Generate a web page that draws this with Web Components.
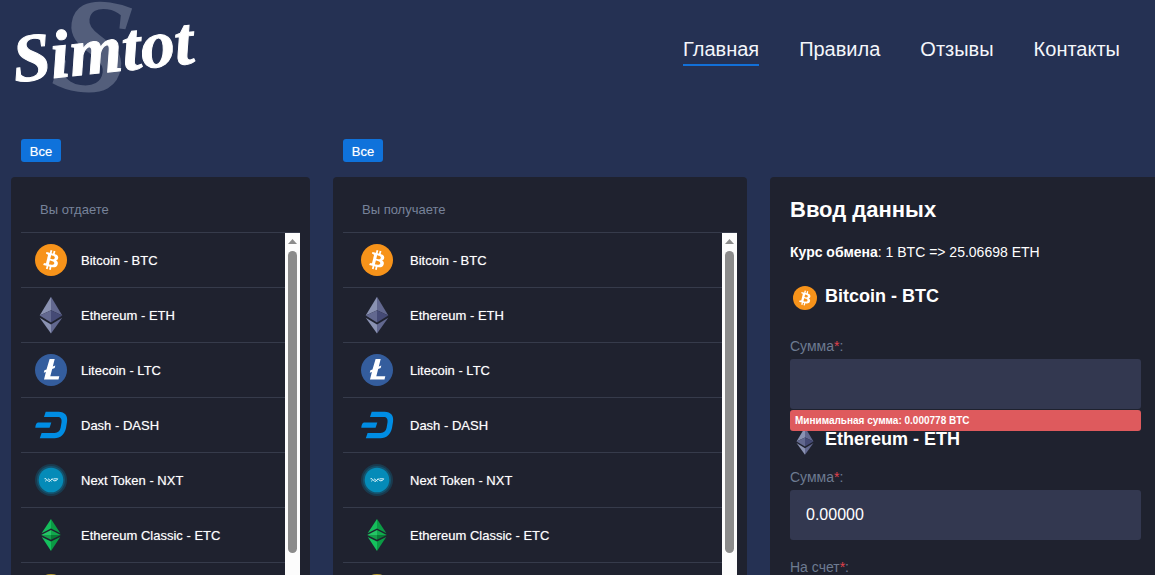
<!DOCTYPE html>
<html lang="ru">
<head>
<meta charset="utf-8">
<meta name="viewport" content="width=device-width, initial-scale=1">
<title>Simtot</title>
<style>
  html { scrollbar-width: none; }
  body {
    margin: 0;
    background: #253153;
    color: #fff;
    font-family: "Liberation Sans", Arial, sans-serif;
    font-size: 14px;
    overflow-x: hidden;
  }
</style>
</head>
<body>
<exchange-page></exchange-page>
<script>
const define = (name, html, setup) => {
  const template = document.createElement('template');
  template.innerHTML = html;
  customElements.define(name, class extends HTMLElement {
    constructor() {
      super();
      this.attachShadow({ mode: 'open' }).append(template.content.cloneNode(true));
    }
    connectedCallback() { if (setup) setup(this, this.shadowRoot); }
  });
};

/* Coin artwork, drawn on a 40 x 40 canvas */
const coins = {
  btc: `<circle cx="20" cy="20" r="16" fill="#f7931a"/><path transform="translate(4 4)" fill="#fff" d="M23.189 14.02c.314-2.096-1.283-3.223-3.465-3.975l.708-2.84-1.728-.43-.69 2.765c-.454-.114-.92-.22-1.385-.326l.695-2.783L15.596 6l-.708 2.839c-.376-.086-.746-.17-1.104-.26l.002-.009-2.384-.595-.46 1.846s1.283.294 1.256.312c.7.175.826.638.805 1.006l-.806 3.235c.048.012.11.03.18.057l-.183-.045-1.13 4.532c-.086.212-.303.531-.793.41.018.025-1.256-.313-1.256-.313l-.858 1.978 2.25.561c.418.105.828.215 1.231.318l-.715 2.872 1.727.43.708-2.84c.472.127.93.245 1.378.357l-.706 2.828 1.728.43.715-2.866c2.948.558 5.164.333 6.097-2.333.752-2.146-.037-3.385-1.588-4.192 1.13-.26 1.98-1.003 2.207-2.538zm-3.95 5.538c-.533 2.147-4.148.986-5.32.695l.95-3.805c1.172.293 4.929.872 4.37 3.11zm.535-5.569c-.487 1.953-3.495.96-4.47.717l.86-3.45c.975.243 4.118.696 3.61 2.733z"/>`,
  eth: `<path fill="#8a92b2" d="M20 1.700v13.600L8.700 20.500z"/><path fill="#62688f" d="M20 1.700v13.600l11.300 5.200z"/><path fill="#62688f" d="M8.700 20.500 20 15.300v12.100z"/><path fill="#454a75" d="M31.300 20.500 20 15.300v12.100z"/><path fill="#8a92b2" d="M8.700 22.700 20 29.500v8.900z"/><path fill="#62688f" d="M31.300 22.700 20 29.500v8.900z"/>`,
  ltc: `<circle cx="20" cy="20" r="16" fill="#345d9d"/><path fill="#fff" d="M18.600 9h5.100l-1.900 7.400 2.500-.9-.6 2.500-2.500.9-1.900 7.300h9l-.8 3.200H13l1.900-7.500-2.100.8.6-2.500 2.100-.8z"/>`,
  dash: `<path fill="#008de4" d="M14.700 6.800H27.500C34 6.800 37 11 36 17L35 23C33.600 29.500 29.500 33.200 23.500 33.200H8.800L10.600 27.900H23.700C27 27.900 28.900 26 29.600 22.800L30.500 17.500C31 14 29.800 12.100 26.500 12.100H13z"/><path fill="#008de4" d="M7 17.600h13.300l-1.700 5.200H4.300C4.500 20 5.300 18 7 17.600z"/>`,
  nxt: `<circle cx="20" cy="20" r="16" fill="#0b83ad" opacity=".25"/><circle cx="20" cy="20" r="14" fill="#0b83ad" opacity=".35"/><circle cx="20" cy="20" r="12.300" fill="#058bb8"/><path fill="none" stroke="#d8f1f8" stroke-width="1" d="M13.500 18.700h1.500l2.500 2.600h1.500M17 18.700l3.500 2.600M14.200 21.300l1.500-1.300M19.500 20.300l2-1.600M21 18.700l2.500 2.600M22.500 18.800h4.200l-1.400 1.800h-2"/>`,
  etc: `<path fill="#15bd5c" d="M20 4v9.500l-9.400 4.700z"/><path fill="#0b9b45" d="M20 4v9.500l9.400 4.700z"/><path fill="#25c566" d="M10.200 20 20 15.100v4.800z"/><path fill="#12a94d" d="M29.800 20 20 15.100v4.800z"/><path fill="#149e4a" d="M10.200 20 20 24.700v-4.800z"/><path fill="#087b35" d="M29.800 20 20 24.700v-4.800z"/><path fill="#15c15e" d="M10.800 22 20 26.400v9.500z"/><path fill="#0b9b45" d="M29.200 22 20 26.400v9.500z"/>`,
  doge: `<circle cx="20" cy="20" r="16" fill="#ba9f33"/><circle cx="20" cy="20" r="13" fill="#e1b303"/>`
};

define('coin-icon', `
  <style>
    :host { display: block; flex: none; width: var(--coin-size, 40px); height: var(--coin-size, 40px); }
    svg { display: block; width: 100%; height: 100%; }
  </style>
  <svg viewBox="0 0 40 40" aria-hidden="true"></svg>`,
  (el, root) => { root.querySelector('svg').innerHTML = coins[el.getAttribute('name')]; });

define('site-header', `
  <style>
    :host { display: flex; justify-content: space-between; align-items: flex-start; height: 100px; padding-right: 35px; }
    .logo { display: block; flex: none; width: 210px; height: 100px; }
    .logo svg { display: block; width: 100%; height: 100%; overflow: visible; }
    text { font-family: "Brush Script MT", "Liberation Serif", serif; font-style: italic; font-weight: bold; }
    nav { display: flex; gap: 40px; padding-top: 36px; }
    nav a { color: #f4f6fb; font-size: 20px; line-height: 26px; text-decoration: none; padding-bottom: 2px; border-bottom: 2px solid transparent; }
    nav a[aria-current] { border-color: #1270d8; }
  </style>
  <a class="logo" href="#" aria-label="Simtot">
    <svg viewBox="0 0 210 100" aria-hidden="true">
      <text x="55" y="93" font-size="138" fill="#535e7b" transform="rotate(8 100 50)">S</text>
      <text x="15" y="82" font-size="68" fill="#fff" stroke="#fff" stroke-width="1" transform="rotate(-6 15 82)">Simtot</text>
    </svg>
  </a>
  <nav>
    <a href="#" aria-current="page">Главная</a>
    <a href="#">Правила</a>
    <a href="#">Отзывы</a>
    <a href="#">Контакты</a>
  </nav>`);

define('coin-row', `
  <style>
    :host { display: block; }
    a { display: flex; align-items: center; gap: var(--row-gap, 10px); height: 54px; padding-left: var(--row-pad, 10px); border-bottom: 1px solid #363b4b; color: #fff; font-size: 13px; text-decoration: none; text-shadow: 0 0 1px #ffffff80; }
  </style>
  <a href="#"><coin-icon></coin-icon><slot></slot></a>`,
  (el, root) => {
    const icon = document.createElement('coin-icon');
    icon.setAttribute('name', el.getAttribute('coin'));
    root.querySelector('coin-icon').replaceWith(icon);
  });

define('scroll-rail', `
  <style>
    :host { display: flex; flex-direction: column; align-items: center; flex: none; width: 15px; background: #fcfcfc; }
    svg { display: block; width: 15px; height: 18px; }
    div { width: 9px; height: 302px; border-radius: 5px; background: #8b8b8b; }
  </style>
  <svg viewBox="0 0 15 18" aria-hidden="true"><path fill="#8b8b8b" d="M3 11 7.500 6 12 11z"/></svg>
  <div></div>`);

define('coin-panel', `
  <style>
    :host { display: block; min-width: 0; }
    .filter { padding: 0 10px 15px; }
    button { display: block; min-width: 40px; height: 23px; padding: 1px 8px 0; border: 0; border-radius: 3px; background: #0f72db; color: #fff; font: 13px "Liberation Sans", Arial, sans-serif; text-shadow: 0 0 1px #ffffff80; }
    section { padding: 10px; border-radius: 4px; background: #1f222f; }
    h2 { margin: 0; padding: 0 19px; border-bottom: 1px solid #363b4b; color: #77839a; font-size: 13px; font-weight: normal; line-height: 45px; }
    .body { display: flex; height: 400px; overflow: hidden; }
    .list { flex: 1; min-width: 0; }
  </style>
  <div class="filter"><button type="button">Все</button></div>
  <section>
    <h2><slot name="title"></slot></h2>
    <div class="body">
      <div class="list">
        <coin-row coin="btc">Bitcoin - BTC</coin-row>
        <coin-row coin="eth">Ethereum - ETH</coin-row>
        <coin-row coin="ltc">Litecoin - LTC</coin-row>
        <coin-row coin="dash">Dash - DASH</coin-row>
        <coin-row coin="nxt">Next Token - NXT</coin-row>
        <coin-row coin="etc">Ethereum Classic - ETC</coin-row>
        <coin-row coin="doge"></coin-row>
      </div>
      <scroll-rail></scroll-rail>
    </div>
  </section>`);

define('form-field', `
  <style>
    :host { display: block; position: relative; }
    label { display: block; padding-bottom: 3px; color: #6d7b91; font-size: 14px; line-height: 20px; }
    span { color: #e0414b; }
    input { display: block; box-sizing: border-box; width: 100%; height: 50px; padding: 0 16px; border: 0; border-radius: 3px; background: #333850; color: #fff; font: 16px "Liberation Sans", Arial, sans-serif; outline: 0; }
    .error { position: absolute; top: 100%; left: 0; right: 0; z-index: 1; margin-top: 1px; padding: 0 5px; border-radius: 3px; background: #de5a5d; color: #fff; font-size: 10px; font-weight: bold; line-height: 21px; }
    .error[hidden] { display: none; }
  </style>
  <label for="field"><slot></slot><span>*</span>:</label>
  <input id="field" type="text">
  <div class="error" role="alert" hidden></div>`,
  (el, root) => {
    root.querySelector('input').value = el.getAttribute('value') || '';
    const error = root.querySelector('.error');
    error.textContent = el.getAttribute('error') || '';
    error.hidden = !el.hasAttribute('error');
  });

define('exchange-form', `
  <style>
    :host { display: block; min-width: 0; padding-top: 38px; }
    form { padding: 20px 14px 20px 20px; border-radius: 4px 0 0 4px; background: #1f222f; }
    h2 { margin: 0; font-size: 22px; line-height: 26px; }
    p { margin: 0; padding: 19px 0 21px; line-height: 20px; }
    h3 { display: flex; align-items: flex-start; gap: 5px; height: 30px; margin: 0 0 23px; font-size: 18px; line-height: 26px; --coin-size: 30px; }
    h3.receive { margin: 17px 0 11px; }
    .account { margin-top: 17px; }
  </style>
  <form>
    <h2>Ввод данных</h2>
    <p><b>Курс обмена</b>: 1 BTC =&gt; 25.06698 ETH</p>
    <h3><coin-icon name="btc"></coin-icon>Bitcoin - BTC</h3>
    <form-field error="Минимальная сумма: 0.000778 BTC">Сумма</form-field>
    <h3 class="receive"><coin-icon name="eth"></coin-icon>Ethereum - ETH</h3>
    <form-field value="0.00000">Сумма</form-field>
    <form-field class="account">На счет</form-field>
  </form>`);

define('exchange-page', `
  <style>
    :host { display: block; }
    main { display: grid; grid-template-columns: 299fr 414fr 385fr; align-items: start; gap: 23px; padding: 39px 0 30px 11px; }
    .receive { --row-pad: 14px; --row-gap: 13px; }
  </style>
  <site-header></site-header>
  <main>
    <coin-panel><span slot="title">Вы отдаете</span></coin-panel>
    <coin-panel class="receive"><span slot="title">Вы получаете</span></coin-panel>
    <exchange-form></exchange-form>
  </main>`);
</script>
</body>
</html>
